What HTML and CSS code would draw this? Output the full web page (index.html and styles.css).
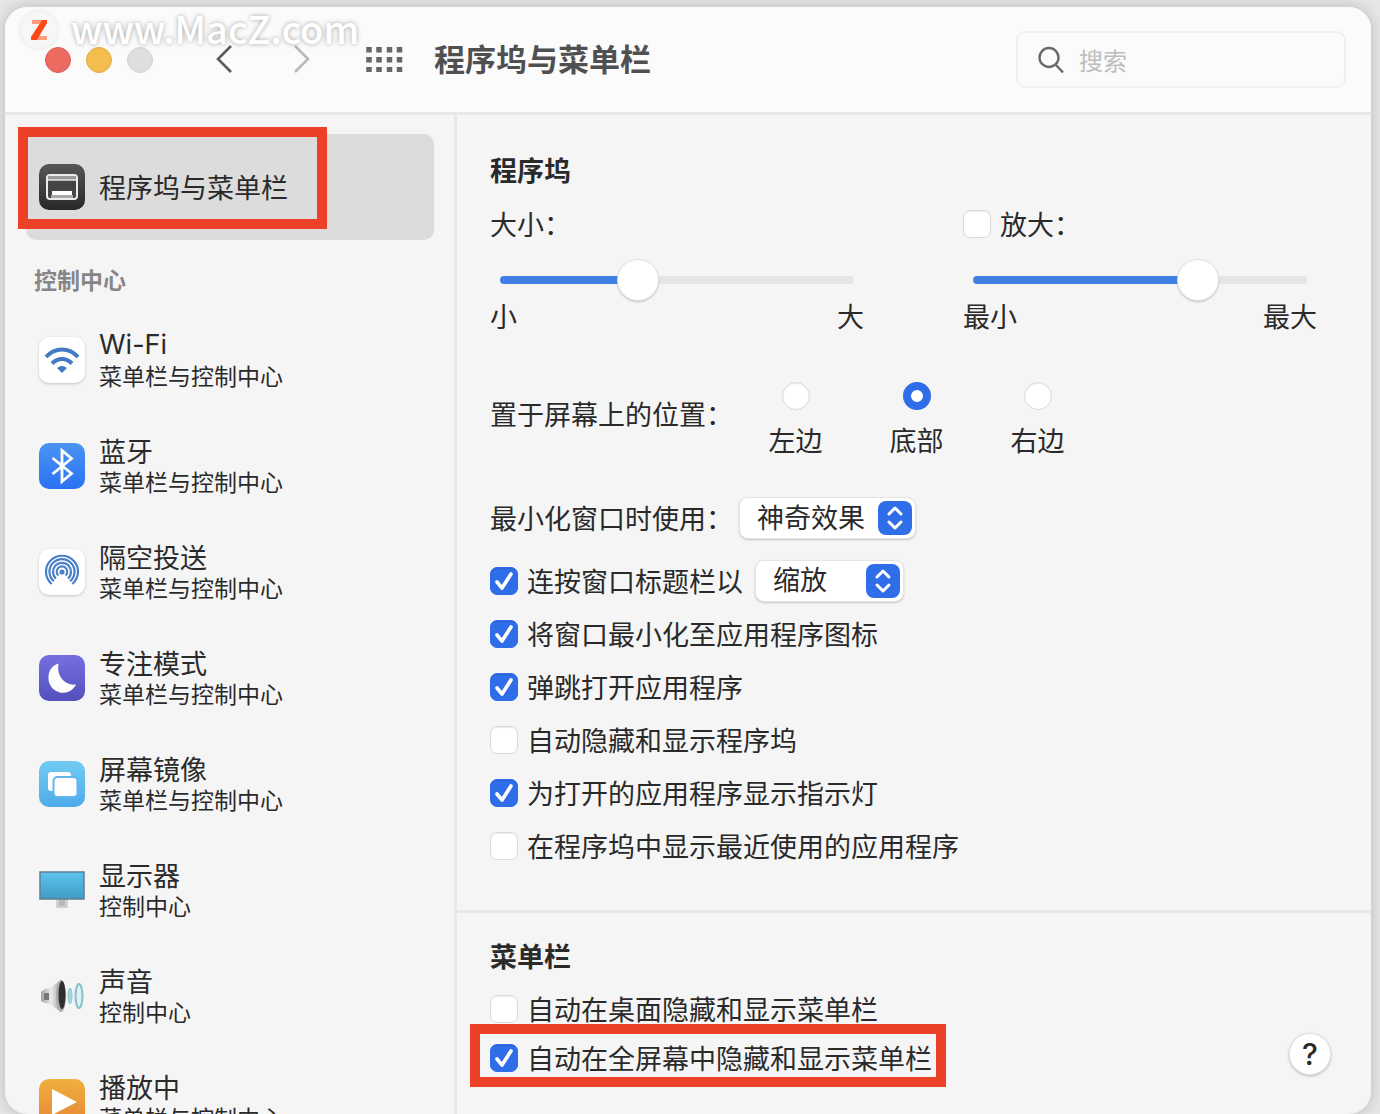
FILE: index.html
```html
<!DOCTYPE html>
<html lang="zh-CN">
    <head>
        <meta charset="utf-8">
        <meta name="viewport" content="width=device-width, initial-scale=1">
        <title>程序坞与菜单栏</title>
        <link rel="stylesheet" href="styles.css">
    </head>
    <body>
        <div class="window">
            <header class="toolbar">
                <div class="lights">
                    <button type="button" class="light red" aria-label="关闭"></button>
                    <button type="button" class="light yellow" aria-label="最小化"></button>
                    <button type="button" class="light" aria-label="缩放" disabled></button>
                </div>
                <nav class="history">
                    <button type="button" class="plain" aria-label="后退">
                        <svg width="18" height="30" viewBox="0 0 18 30"><path d="M16 1 3 14l13 13" fill="none" stroke="#5c5c5c" stroke-width="2.6"/></svg>
                    </button>
                    <button type="button" class="plain" aria-label="前进">
                        <svg width="18" height="30" viewBox="0 0 18 30"><path d="m2 1 13 13L2 27" fill="none" stroke="#b9b9b9" stroke-width="2.6"/></svg>
                    </button>
                </nav>
                <button type="button" class="plain" aria-label="显示全部">
                    <svg width="38" height="28" viewBox="0 0 38 28">
                        <path d="M4 1v25M14 1v25M24.500 1v25M34.500 1v25" stroke="#666" stroke-width="5.500" stroke-dasharray="5.500 4.500"/>
                    </svg>
                </button>
                <h1>程序坞与菜单栏</h1>
                <label class="search">
                    <svg width="28" height="28" viewBox="0 0 28 28"><g fill="none" stroke="#6a6a6a" stroke-width="2.400"><circle cx="11" cy="11.500" r="9.500"/><path d="m17.500 18.500 7.500 8"/></g></svg>
                    <input type="search" placeholder="搜索" aria-label="搜索">
                </label>
            </header>

            <div class="content">
                <aside class="sidebar">
                    <a href="#dock" class="item selected">
                        <svg class="icon" viewBox="0 0 46 46">
                            <defs><linearGradient id="dark" x2="0" y2="1"><stop stop-color="#575757"/><stop offset="1" stop-color="#282828"/></linearGradient></defs>
                            <rect width="46" height="46" rx="10" fill="url(#dark)"/>
                            <rect x="8" y="11" width="30" height="24" rx="3" fill="#444" stroke="#ececec" stroke-width="2"/>
                            <path d="M9 12h28v4H9z" fill="#9a9a9a"/>
                            <path d="M9 16h28" stroke="#e4e4e4" stroke-width="1.500"/>
                            <path d="M12 31h22v3H12z" fill="#aaa"/>
                            <path d="M13 27h20v4H13z" fill="#fff"/>
                        </svg>
                        <span class="name">程序坞与菜单栏</span>
                        <span class="highlight"></span>
                    </a>
                    <h2 class="group">控制中心</h2>
                    <a href="#wifi" class="item">
                        <svg class="icon white" viewBox="0 0 46 46">
                            <rect width="46" height="46" rx="10" fill="#fff"/>
                            <g fill="none" stroke="#4479c4" stroke-width="4">
                                <path d="M7 20c9-10 23-10 32 0"/>
                                <path d="M13 26.500c6-6 14-6 20 0"/>
                            </g>
                            <path d="m23 36-5-5q5-4 10 0z" fill="#4479c4"/>
                        </svg>
                        <span class="text"><span class="name" lang="en">Wi-Fi</span><span class="sub">菜单栏与控制中心</span></span>
                    </a>
                    <a href="#bluetooth" class="item">
                        <svg class="icon" viewBox="0 0 46 46">
                            <defs><linearGradient id="blue" x2="0" y2="1"><stop stop-color="#4a94f2"/><stop offset="1" stop-color="#2a72f2"/></linearGradient></defs>
                            <rect width="46" height="46" rx="10" fill="url(#blue)"/>
                            <path d="m13.500 15 19 15.500-9.500 8V7.500l9.500 8-19 15.500" fill="none" stroke="#fff" stroke-width="2.800"/>
                        </svg>
                        <span class="text"><span class="name">蓝牙</span><span class="sub">菜单栏与控制中心</span></span>
                    </a>
                    <a href="#airdrop" class="item">
                        <svg class="icon white" viewBox="0 0 46 46">
                            <rect width="46" height="46" rx="10" fill="#fff"/>
                            <g fill="none" stroke="#4a80c8" stroke-width="2.200">
                                <path d="M12.700 35a16 16 0 1 1 20.600 0"/>
                                <path d="M14.900 32.200a12.500 12.500 0 1 1 16.200 0"/>
                                <path d="M17 29.500a9 9 0 1 1 12 0"/>
                                <path d="M19.300 26.500a5.300 5.300 0 1 1 7.400 0"/>
                            </g>
                            <circle cx="23" cy="23" r="2.600" fill="#4a80c8"/>
                        </svg>
                        <span class="text"><span class="name">隔空投送</span><span class="sub">菜单栏与控制中心</span></span>
                    </a>
                    <a href="#focus" class="item">
                        <svg class="icon" viewBox="0 0 46 46">
                            <defs><linearGradient id="purple" x2="0" y2="1"><stop stop-color="#7470e2"/><stop offset="1" stop-color="#5350bd"/></linearGradient></defs>
                            <rect width="46" height="46" rx="10" fill="url(#purple)"/>
                            <path d="M19.500 8.500C14 10 9.500 15 9.500 22a14.500 14.500 0 0 0 27.500 7.500C27 31 17 22 19.500 8.500z" fill="#fff"/>
                        </svg>
                        <span class="text"><span class="name">专注模式</span><span class="sub">菜单栏与控制中心</span></span>
                    </a>
                    <a href="#mirroring" class="item">
                        <svg class="icon" viewBox="0 0 46 46">
                            <defs><linearGradient id="sky" x2="0" y2="1"><stop stop-color="#72cbf2"/><stop offset="1" stop-color="#4eabea"/></linearGradient></defs>
                            <rect width="46" height="46" rx="10" fill="url(#sky)"/>
                            <rect x="9" y="11" width="23" height="19" rx="3" fill="#fff"/>
                            <rect x="14.500" y="16" width="24" height="20" rx="4" fill="#fff" stroke="#5eb8ed" stroke-width="2"/>
                        </svg>
                        <span class="text"><span class="name">屏幕镜像</span><span class="sub">菜单栏与控制中心</span></span>
                    </a>
                    <a href="#display" class="item">
                        <svg class="icon" viewBox="0 0 46 46">
                            <defs><linearGradient id="screen" x2="0" y2="1"><stop stop-color="#5cc3ee"/><stop offset="1" stop-color="#419cc5"/></linearGradient></defs>
                            <path d="M17 32h12v9H17z" fill="#d0d0d2"/>
                            <path d="M20 32h6v7h-6z" fill="#b9b9bc"/>
                            <rect x="1" y="5" width="44" height="27" fill="url(#screen)" stroke="#5c7f8e" stroke-width="1.500"/>
                        </svg>
                        <span class="text"><span class="name">显示器</span><span class="sub">控制中心</span></span>
                    </a>
                    <a href="#sound" class="item">
                        <svg class="icon" viewBox="0 0 46 46">
                            <defs><linearGradient id="metal"><stop stop-color="#a0a0a0"/><stop offset=".5" stop-color="#ececec"/><stop offset="1" stop-color="#a4a4a4"/></linearGradient></defs>
                            <path d="M2 19q4-4 9-4l11-8v32l-11-8q-5 0-9-3z" fill="url(#metal)"/>
                            <path d="M5 20h5v7H5z" fill="#777"/>
                            <ellipse cx="22" cy="23" rx="5" ry="16" fill="#aaa"/>
                            <ellipse cx="23" cy="22" rx="3.500" ry="14" fill="#303030"/>
                            <ellipse cx="31" cy="23" rx="2" ry="8" fill="#a5d5df" stroke="#8ec6d3"/>
                            <ellipse cx="40" cy="23" rx="3.500" ry="12" fill="#e0f1f4" stroke="#82c2d0" stroke-width="2"/>
                        </svg>
                        <span class="text"><span class="name">声音</span><span class="sub">控制中心</span></span>
                    </a>
                    <a href="#playing" class="item">
                        <svg class="icon" viewBox="0 0 46 46">
                            <defs><linearGradient id="orange" x2="0" y2="1"><stop stop-color="#efb040"/><stop offset="1" stop-color="#e88632"/></linearGradient></defs>
                            <rect width="46" height="46" rx="10" fill="url(#orange)"/>
                            <path d="m13 10 25 13-25 13z" fill="#fff"/>
                        </svg>
                        <span class="text"><span class="name">播放中</span><span class="sub">菜单栏与控制中心</span></span>
                    </a>
                </aside>

                <main>
                    <section class="dock" id="dock">
                        <h2>程序坞</h2>
                        <div class="sliders">
                            <div>
                                <label class="caption" for="size">大小：</label>
                                <input type="range" id="size" min="0" max="1000" value="374" style="--fill: 39%">
                                <div class="ends"><span>小</span><span>大</span></div>
                            </div>
                            <div>
                                <label class="caption"><input type="checkbox">放大：</label>
                                <input type="range" aria-label="放大" min="0" max="1000" value="699" style="--fill: 67%">
                                <div class="ends"><span>最小</span><span>最大</span></div>
                            </div>
                        </div>
                        <div class="position" role="radiogroup" aria-labelledby="position">
                            <span id="position">置于屏幕上的位置：</span>
                            <label><input type="radio" name="position">左边</label>
                            <label><input type="radio" name="position" checked>底部</label>
                            <label><input type="radio" name="position">右边</label>
                        </div>
                        <div class="effect">
                            <label for="effect">最小化窗口时使用：</label>
                            <span class="popup">
                                <select id="effect"><option>神奇效果</option><option>缩放效果</option></select>
                                <svg width="34" height="34" viewBox="0 0 34 34"><rect width="34" height="34" rx="8" fill="#2f6de9"/><path d="m11 13 6-6 6 6M11 21l6 6 6-6" fill="none" stroke="#fff" stroke-width="3" stroke-linecap="round" stroke-linejoin="round"/></svg>
                            </span>
                        </div>
                        <div class="options">
                            <div class="row">
                                <label><input type="checkbox" checked>连按窗口标题栏以</label>
                                <span class="popup short">
                                    <select aria-label="连按动作"><option>缩放</option><option>最小化</option></select>
                                    <svg width="34" height="34" viewBox="0 0 34 34"><rect width="34" height="34" rx="8" fill="#2f6de9"/><path d="m11 13 6-6 6 6M11 21l6 6 6-6" fill="none" stroke="#fff" stroke-width="3" stroke-linecap="round" stroke-linejoin="round"/></svg>
                                </span>
                            </div>
                            <div class="row"><label><input type="checkbox" checked>将窗口最小化至应用程序图标</label></div>
                            <div class="row"><label><input type="checkbox" checked>弹跳打开应用程序</label></div>
                            <div class="row"><label><input type="checkbox">自动隐藏和显示程序坞</label></div>
                            <div class="row"><label><input type="checkbox" checked>为打开的应用程序显示指示灯</label></div>
                            <div class="row"><label><input type="checkbox">在程序坞中显示最近使用的应用程序</label></div>
                        </div>
                    </section>

                    <section class="menubar">
                        <div>
                            <h2>菜单栏</h2>
                            <div class="row"><label><input type="checkbox">自动在桌面隐藏和显示菜单栏</label></div>
                            <div class="row"><label><input type="checkbox" checked>自动在全屏幕中隐藏和显示菜单栏<span class="highlight"></span></label></div>
                        </div>
                        <button type="button" class="help" aria-label="帮助">?</button>
                    </section>
                </main>
            </div>
        </div>

        <div class="watermark">
            <svg width="36" height="36" viewBox="0 0 36 36">
                <circle cx="18" cy="18" r="18" fill="#f7f7f7"/>
                <path d="M11 8h15v4H11zM11 24h15v4H11z" fill="#ff9b80"/>
                <path d="M21 8h5v3L16 28h-6v-3z" fill="#fc4a16"/>
            </svg>
            <span>www.MacZ.com</span>
        </div>
    </body>
</html>
```

FILE: styles.css
```css
* {
    box-sizing: border-box;
}

body {
    margin: 0;
    height: 100vh;
    padding: 7px 9px 0 5px;
    overflow: hidden;
    background: #e6e6e6;
    color: #2a2a2a;
    font-family: "Noto Sans CJK SC", sans-serif;
    font-size: 27px;
    line-height: 30px;
}

h1, h2 {
    margin: 0;
}

button, input, select {
    margin: 0;
    color: inherit;
    font: inherit;
}

.window {
    display: flex;
    flex-direction: column;
    height: 100%;
    overflow: hidden;
    border-radius: 22px;
    background: #f5f5f5;
    box-shadow: 0 0 14px rgba(0, 0, 0, .2);
}

/* Toolbar */

.toolbar {
    display: flex;
    flex: none;
    align-items: center;
    height: 108px;
    padding: 0 25px 0 40px;
    border-bottom: 3px solid #e8e8e8;
    background: #fbfbfb;
}

.lights {
    display: flex;
    gap: 15px;
}

.light {
    width: 26px;
    height: 26px;
    padding: 0;
    border: 1px solid #d2d2d2;
    border-radius: 50%;
    background: #dedede;
}

.light.red {
    border-color: #d95d56;
    background: #ec6a5f;
}

.light.yellow {
    border-color: #dfab48;
    background: #f4be4f;
}

.plain {
    display: flex;
    padding: 0;
    border: 0;
    background: none;
}

.history {
    display: flex;
    gap: 60px;
    margin: 0 54px 0 62px;
}

h1 {
    margin-left: 31px;
    padding-bottom: 4px;
    color: #505050;
    font-size: 31px;
    font-weight: 700;
}

.search {
    display: flex;
    align-items: center;
    gap: 13px;
    width: 330px;
    height: 57px;
    margin-left: auto;
    padding: 0 20px;
    border: 2px solid #f0f0f0;
    border-radius: 9px;
}

.search svg {
    flex: none;
}

.search input {
    width: 100%;
    min-width: 0;
    padding: 0;
    border: 0;
    outline: 0;
    background: none;
    font-size: 24px;
}

.search input::placeholder {
    color: #bdbdbd;
}

/* Sidebar */

.content {
    display: flex;
    flex: 1;
    min-height: 0;
}

.sidebar {
    flex: none;
    width: 452px;
    padding: 19px 20px 0 21px;
    overflow: hidden;
    border-right: 3px solid #e8e8e8;
}

.item {
    position: relative;
    display: flex;
    align-items: center;
    gap: 14px;
    height: 106px;
    padding-left: 13px;
    border-radius: 10px;
    color: inherit;
    text-decoration: none;
}

.item.selected {
    background: #dcdcdc;
}

.icon {
    flex: none;
    width: 46px;
    height: 46px;
}

.icon.white {
    border-radius: 10px;
    box-shadow: 0 1px 3px rgba(0, 0, 0, .2);
}

.text {
    display: flex;
    flex-direction: column;
}

.name:lang(en) {
    font-family: Inter, sans-serif;
}

.sub {
    font-size: 23px;
}

.group {
    padding: 24px 8px 13px;
    color: #868686;
    font-size: 23px;
    font-weight: 700;
}

/* Settings */

main {
    flex: 1;
    min-width: 0;
}

main h2 {
    font-size: 27px;
    font-weight: 700;
    line-height: 38px;
}

.dock {
    padding: 36px 54px 38px 33px;
    border-bottom: 3px solid #e8e8e8;
}

.sliders {
    display: grid;
    grid-template-columns: 374fr 354fr;
    gap: 99px;
    margin-top: 15px;
}

.caption {
    display: flex;
    align-items: center;
    gap: 9px;
    height: 40px;
}

.ends {
    display: flex;
    justify-content: space-between;
}

input[type="range"] {
    display: block;
    width: calc(100% - 20px);
    height: 42px;
    margin: 15px 10px 0;
    background: none;
    appearance: none;
}

input[type="range"]::-webkit-slider-runnable-track {
    height: 8px;
    border-radius: 4px;
    background: linear-gradient(to right, #3f7fe3 var(--fill), #e5e5e5 var(--fill));
}

input[type="range"]::-webkit-slider-thumb {
    width: 42px;
    height: 42px;
    margin-top: -17px;
    border: 1px solid #e2e2e2;
    border-radius: 50%;
    background: #fff;
    box-shadow: 0 1px 2px rgba(0, 0, 0, .2);
    appearance: none;
}

.position {
    display: flex;
    margin-top: 51px;
}

.position span {
    margin-right: 2px;
    line-height: 64px;
}

.position label {
    display: flex;
    flex-direction: column;
    align-items: center;
    gap: 15px;
    width: 121px;
}

input[type="checkbox"], input[type="radio"] {
    flex: none;
    width: 28px;
    height: 28px;
    border: 1px solid #dadada;
    border-radius: 7px;
    background: #fff;
    box-shadow: inset 0 1px 1px rgba(0, 0, 0, .08);
    appearance: none;
}

input[type="radio"] {
    border-radius: 50%;
}

input[type="checkbox"]:checked {
    border-color: #2f6de9;
    background: #2f6de9 url("data:image/svg+xml,%3Csvg xmlns='http://www.w3.org/2000/svg' viewBox='0 0 26 26'%3E%3Cpath d='m6 14 5 6 9-14' fill='none' stroke='white' stroke-width='3.6' stroke-linecap='round' stroke-linejoin='round'/%3E%3C/svg%3E");
}

input[type="radio"]:checked {
    border: 8px solid #2f6de9;
    box-shadow: none;
}

.effect {
    display: flex;
    align-items: center;
    gap: 6px;
    height: 44px;
    margin-top: 41px;
}

.popup {
    position: relative;
    width: 177px;
    height: 42px;
}

.popup.short {
    width: 149px;
}

.popup select {
    width: 100%;
    height: 42px;
    padding: 0 40px 3px 17px;
    border: 1px solid #e4e4e4;
    border-radius: 9px;
    background: #fff;
    box-shadow: 0 1px 2px rgba(0, 0, 0, .2);
    appearance: none;
}

/* Arrows lie over the select's right end */
.popup svg {
    position: absolute;
    top: 4px;
    right: 4px;
    pointer-events: none;
}

.options {
    margin-top: 14px;
}

.row {
    display: flex;
    align-items: center;
    gap: 12px;
    height: 53px;
}

.row label {
    position: relative;
    display: flex;
    align-items: center;
    gap: 9px;
}

.menubar {
    display: flex;
    align-items: flex-end;
    justify-content: space-between;
    padding: 24px 40px 0 33px;
}

.menubar h2 {
    margin-bottom: 9px;
}

.menubar .row {
    height: 49px;
}

.help {
    width: 42px;
    height: 42px;
    margin-bottom: 7px;
    padding: 0;
    border: 1px solid #e4e4e4;
    border-radius: 50%;
    background: #fff;
    box-shadow: 0 1px 3px rgba(0, 0, 0, .25);
    font-family: Inter, sans-serif;
    font-size: 30px;
    font-weight: 500;
}

/* Marks over the interface */

.highlight {
    position: absolute;
    border: 10px solid #ec4027;
    pointer-events: none;
}

.item .highlight {
    top: -7px;
    left: -8px;
    width: 309px;
    height: 102px;
}

.row .highlight {
    top: -19px;
    right: -14px;
    bottom: -14px;
    left: -20px;
}

.watermark {
    position: absolute;
    top: 10px;
    left: 21px;
    display: flex;
    align-items: center;
    gap: 14px;
    color: #fff;
    font-size: 38px;
    font-weight: 500;
    line-height: 36px;
    text-shadow: 0 0 5px rgba(0, 0, 0, .35);
    pointer-events: none;
}

.watermark svg {
    border-radius: 50%;
    box-shadow: 0 0 5px rgba(0, 0, 0, .12);
}

.watermark span {
    padding-bottom: 4px;
}
```
